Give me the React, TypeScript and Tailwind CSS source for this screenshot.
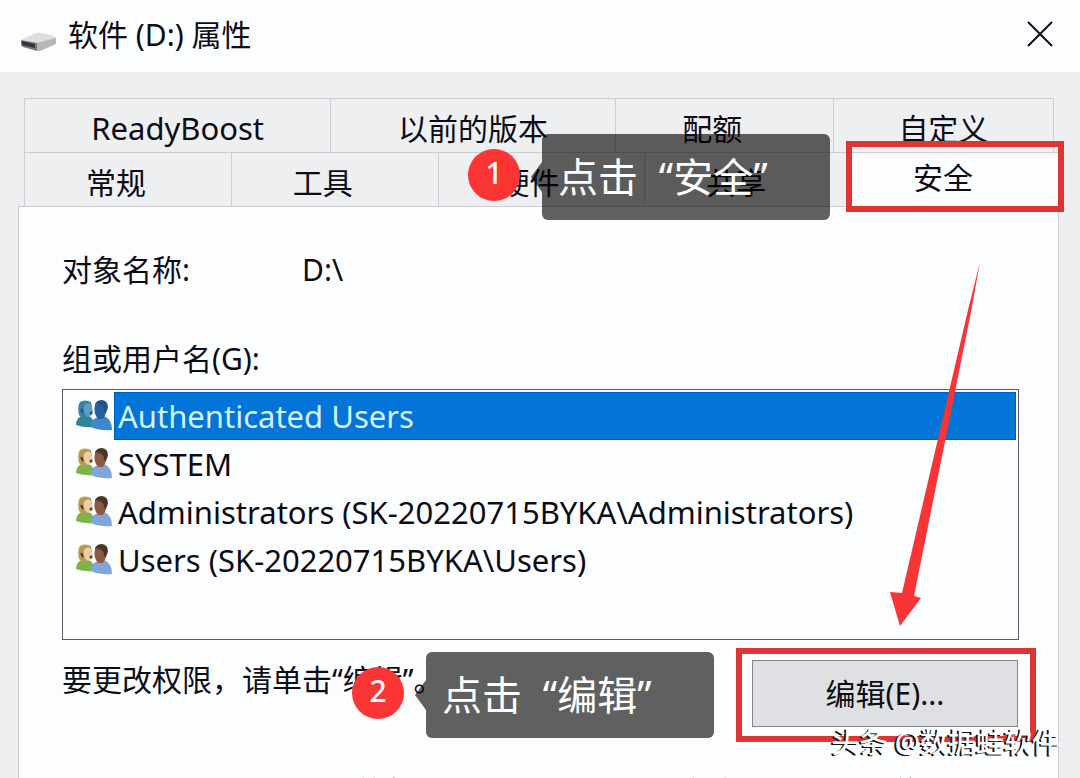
import type { ReactNode } from "react";

const topTabs = [
  { label: "ReadyBoost", className: "text-[31px]" },
  { label: "以前的版本", className: "" },
  { label: "配额", className: "pr-6" },
  { label: "自定义", className: "" },
];

const bottomTabs = ["常规", "工具", "硬件", "共享"];

const groups = [
  "Authenticated Users",
  "SYSTEM",
  "Administrators (SK-20220715BYKA\\Administrators)",
  "Users (SK-20220715BYKA\\Users)",
];

function DriveIcon() {
  return (
    <svg className="mt-4" width="38" height="20" viewBox="0 0 38 20" aria-hidden="true">
      <path d="M1 8 L16 1 Q18 0 21 1 L34 4 Q36 5 36 7 L17 12 Z" fill="#dcddde" />
      <path d="M1 8 L17 11 L17 19 L3 15 Q1 14 1 12 Z" fill="#77797b" />
      <path d="M2 9 L15 12 L15 16 L2 13 Z" fill="#35383a" />
      <path d="M17 11 L36 6 L36 11 Q36 12 34 13 L20 19 L17 19 Z" fill="#b4b6b8" />
    </svg>
  );
}

function UsersIcon({ selected }: { selected: boolean }) {
  const c = selected
    ? { hair: "#3a83a8", face: "#5a9fc0", top: "#2f8596", mic: "#1d5573", hair2: "#1d5590", face2: "#27619c", shirt: "#3b8acb" }
    : { hair: "#b99a55", face: "#e8d0a4", top: "#80b24c", mic: "#4a4030", hair2: "#4a352c", face2: "#8a5a40", shirt: "#7fa6d4" };
  return (
    <svg width="36" height="32" viewBox="0 0 36 32" aria-hidden="true">
      <path d="M0 25 Q0 18 6 16 L13 16 Q18 18 18 27 Q8 28 0 25 Z" fill={c.top} />
      <path d="M3 15 Q1 6 4 2 Q9 -1 15 2 L16 7 L11 17 L5 17 Z" fill={c.hair} />
      <path d="M8 6 Q12 1 15 5 L17 11 Q16 16 12 17 Q7 15 8 6 Z" fill={c.face} />
      <path d="M5 9 L7 13" fill="none" stroke={c.mic} strokeWidth="2" />
      <circle cx="15" cy="13" r="1.5" fill={c.mic} />
      <path d="M15 28 Q14 20 20 18 L28 16 Q36 19 36 30 Q24 31 15 27 Z" fill={c.shirt} />
      <path d="M19 5 L30 5 Q31 14 27 19 L22 19 Q17 13 19 5 Z" fill={c.face2} />
      <path d="M19 4 Q21 0 26 0 Q32 1 32 7 Q31 12 29 14 L27 7 Q23 4 19 5 Z" fill={c.hair2} />
    </svg>
  );
}

function StepBadge({ children, className }: { children: ReactNode; className: string }) {
  return (
    <div
      className={`absolute flex size-[52px] items-center justify-center rounded-full bg-[#fb3434] pb-1 text-[30px] leading-none font-medium text-white ${className}`}
    >
      {children}
    </div>
  );
}

function Callout({ children, className }: { children: ReactNode; className: string }) {
  return (
    <div className={`absolute flex items-center ${className}`}>
      <svg width="11" height="30" viewBox="0 0 11 30" aria-hidden="true">
        <path d="M11 0 L0 15 L11 30 Z" fill="#000" fillOpacity="0.62" />
      </svg>
      <div className="flex h-[86px] w-72 items-center rounded-md bg-black/62 pl-4 text-[40px] whitespace-pre text-white">
        {children}
      </div>
    </div>
  );
}

export default function App() {
  return (
    <div className="relative flex h-screen flex-col overflow-hidden bg-[#eeeff1] font-['Noto_Sans','Noto_Sans_CJK_SC',sans-serif] text-[30px] text-[#0c0c14]">
      <header className="flex h-[72px] shrink-0 items-center bg-[#fcfdfe] pr-6 pb-1 pl-5">
        <DriveIcon />
        <h1 className="ml-2.5 grow">软件 (D:) 属性</h1>
        <button type="button" aria-label="关闭" className="flex size-8 items-center justify-center">
          <svg width="26" height="26" viewBox="0 0 26 26" aria-hidden="true">
            <path d="M1 1 L25 25 M25 1 L1 25" stroke="#0c0c14" strokeWidth="2" fill="none" />
          </svg>
        </button>
      </header>

      <nav className="mt-[26px] mr-[22px] ml-6 shrink-0">
        <div className="mr-1 grid h-[54px] grid-cols-[306fr_284fr_218fr_220fr] border-t border-l border-[#cbcdd0]">
          {topTabs.map((tab) => (
            <button key={tab.label} type="button" className={`border-r border-[#cbcdd0] pt-1.5 leading-none ${tab.className}`}>
              {tab.label}
            </button>
          ))}
        </div>
        <div className="flex h-[54px] border-t border-l border-[#cbcdd0]">
          {bottomTabs.map((tab) => (
            <button key={tab} type="button" className="flex-1 border-r border-[#cbcdd0] pt-1.5 pr-6 leading-none">
              {tab}
            </button>
          ))}
          <button type="button" className="relative flex-1 bg-[#fcfdff] pr-6 pb-1 leading-none">
            安全
            <span className="absolute -inset-x-1.5 -top-3 -bottom-1.5 border-6 border-[#dd3434]" />
          </button>
        </div>
      </nav>

      <main className="mr-[21px] ml-[18px] grow border border-[#cbcdd0] bg-[#fcfdff] pr-[39px] pl-[43px]">
        <dl className="mt-10 flex h-11 items-center">
          <dt className="w-60">对象名称:</dt>
          <dd>D:\</dd>
        </dl>
        <h2 id="groups" className="mt-[46px] h-11 leading-[44px]">组或用户名(G):</h2>
        <ul aria-labelledby="groups" className="mt-2 h-[251px] border border-[#5c5c6c] pt-0.5 pr-0.5 pl-[13px]">
          {groups.map((name, i) => (
            <li key={name} className="flex h-12 items-center">
              <UsersIcon selected={i === 0} />
              <span
                className={`ml-0.5 flex h-full grow items-center border border-dotted pl-[3px] text-[31px] whitespace-nowrap ${
                  i === 0 ? "border-[#17416f] bg-[#0374d8] text-[#d5f3ff]" : "border-transparent"
                }`}
              >
                {name}
              </span>
            </li>
          ))}
        </ul>
        <div className="mt-2 -mr-[17px] flex items-start justify-between">
          <p className="mt-2.5 leading-[44px]">要更改权限，请单击“编辑”。</p>
          <div className="flex h-[94px] w-[300px] border-6 border-[#dd3434] py-1.5 pr-3 pl-2.5">
            <button type="button" className="h-[67px] grow border border-[#858589] bg-[#dfe0e3] leading-none">
              编辑(E)...
            </button>
          </div>
        </div>
        <div className="mt-7 grid grid-cols-[618px_183px_1fr] leading-[44px] whitespace-nowrap">
          <span>Authenticated Users 的权限(P)</span>
          <span>允许</span>
          <span>拒绝</span>
        </div>
      </main>

      <svg className="absolute top-[260px] right-[98px]" width="94" height="368" viewBox="0 0 94 368" aria-hidden="true">
        <path d="M92 2 L83 52 L26 336 L33 338 L12 366 L2 332 L14 333 L80 50 Z" fill="#f93434" />
      </svg>

      <StepBadge className="top-[149px] left-[468px]">1</StepBadge>
      <Callout className="top-[134px] left-[531px]">点击  “安全”</Callout>
      <StepBadge className="top-[667px] left-[352px]">2</StepBadge>
      <Callout className="top-[652px] left-[415px]">点击  “编辑”</Callout>

      <div className="absolute top-[720px] right-5 text-[28px] leading-[44px] font-medium whitespace-nowrap text-white [text-shadow:-2px_1px_0_#111]">
        头条 @数据蛙软件
      </div>
    </div>
  );
}
